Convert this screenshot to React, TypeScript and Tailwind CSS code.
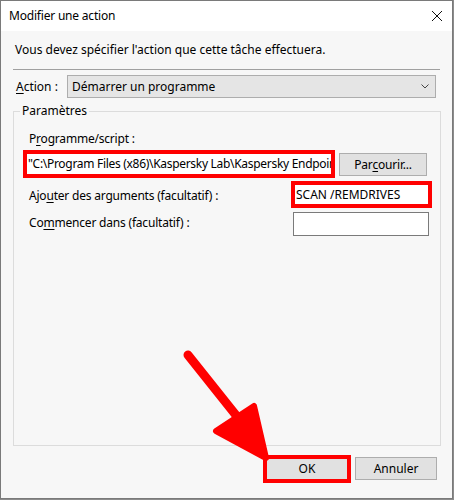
import React from "react";

const font = { fontFamily: '"Noto Sans", "Open Sans", sans-serif' };

function U({ children }: { children: React.ReactNode }) {
  return <span className="underline underline-offset-2 decoration-1">{children}</span>;
}

export default function App() {
  return (
    <div className="w-[454px] h-[500px] bg-[#8c8c8c] relative text-[12px] leading-[16px] text-black" style={font}>
      <div className="w-[453px] h-[499px] border border-[#7a7a7a] bg-[#f7f7f7] flex flex-col">
        {/* Title bar */}
        <div className="h-[30px] bg-white flex items-center justify-between pl-[8px] pr-[9px] shrink-0">
          <span className="text-[12px] tracking-[-0.2px]">Modifier une action</span>
          <svg width="12" height="12" viewBox="0 0 12 12" className="mt-[-1px]">
            <path d="M1 1 L11 11 M11 1 L1 11" stroke="#111" strokeWidth="1" fill="none" />
          </svg>
        </div>
        {/* Body */}
        <div className="flex flex-col pl-[12px] pr-[12px]">
          <div className="mt-[11px] ml-[2px] h-[16px]">
            Vous devez spécifier l'action que cette tâche effectuera.
          </div>
          <div className="mt-[11px] h-px bg-[#a0a0a0]" />
          <div className="mt-[5px] flex items-center">
            <span className="ml-[3px] w-[51px]"><U>A</U>ction :</span>
            <div className="w-[369px] h-[23px] bg-[#e5e5e5] border border-[#adadad] flex items-center justify-between pl-[4px] pr-[6px]">
              <span>Démarrer un programme</span>
              <svg width="8" height="5" viewBox="0 0 8 5">
                <path d="M0.5 0.5 L4 4 L7.5 0.5" stroke="#444" strokeWidth="1" fill="none" />
              </svg>
            </div>
          </div>
          {/* Group box */}
          <div className="mt-[13px] h-[335px] w-[428px] border border-[#dcdcdc] relative flex flex-col pl-[9px]">
            <span className="absolute -top-[9px] left-[6px] px-[2px] bg-[#f7f7f7]">Paramètres</span>
            <div className="mt-[19px] ml-[6px] h-[16px] tracking-[-0.2px]">P<U>r</U>ogramme/script :</div>
            <div className="mt-[3px] flex items-start">
              <div className="w-[312px] h-[28px] border-4 border-[#ff0000] bg-white flex items-center pl-[1px] overflow-hidden whitespace-nowrap tracking-[-0.3px]">
                "C:\Program Files (x86)\Kaspersky Lab\Kaspersky Endpoint
              </div>
              <div className="ml-[4px] mt-[3px] w-[88px] h-[23px] bg-[#e1e1e1] border border-[#adadad] flex items-center justify-center tracking-[-0.2px]">
                Par<U>c</U>ourir...
              </div>
            </div>
            <div className="mt-[3px] flex items-start">
              <span className="ml-[6px] mt-[7px] tracking-[-0.2px]">Ajo<U>u</U>ter des arguments (facultatif) :</span>
              <div className="ml-auto mr-[8px] w-[141px] h-[27px] border-4 border-[#ff0000] bg-white flex items-center pl-[1px]">
                SCAN /REMDRIVES
              </div>
            </div>
            <div className="mt-[4px] flex items-start">
              <span className="ml-[6px] mt-[3px] tracking-[-0.2px]">Co<U>m</U>mencer dans (facultatif) :</span>
              <div className="ml-auto mr-[11px] w-[136px] h-[24px] border border-[#7a7a7a] bg-white" />
            </div>
          </div>
          {/* Buttons */}
          <div className="mt-[9px] flex items-start justify-end pr-[3px]">
            <div className="w-[88px] h-[28px] border-4 border-[#ff0000] bg-[#e1e1e1] flex items-center justify-center">
              OK
            </div>
            <div className="ml-[4px] mt-[2px] w-[82px] h-[23px] bg-[#e1e1e1] border border-[#adadad] flex items-center justify-center">
              Annuler
            </div>
          </div>
        </div>
      </div>
      {/* Arrow annotation */}
      <svg className="absolute left-0 top-0 pointer-events-none" width="454" height="500" viewBox="0 0 454 500">
        <line x1="188" y1="355" x2="243" y2="424" stroke="#ff0000" strokeWidth="9" strokeLinecap="round" />
        <polygon points="216,431 254,406 266,458" fill="#ff0000" stroke="#ff0000" strokeWidth="6" strokeLinejoin="round" />
      </svg>
    </div>
  );
}
